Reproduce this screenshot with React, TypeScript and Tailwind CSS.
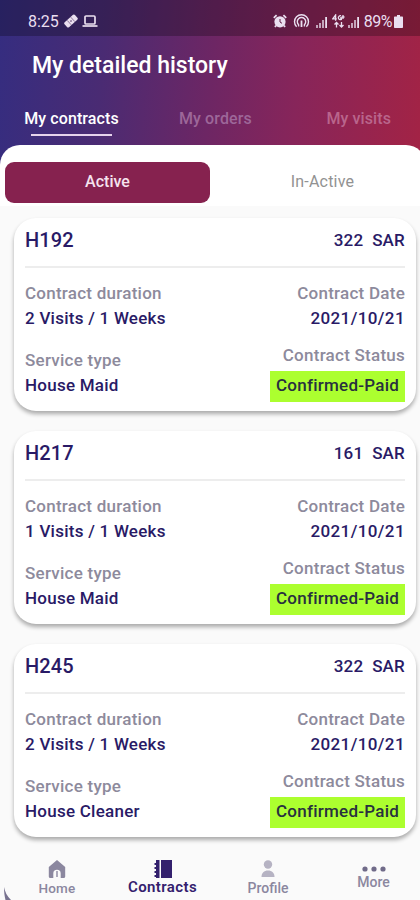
import React from 'react';

interface Contract {
  id: string;
  price: number;
  duration: string;
  date: string;
  service: string;
  status: string;
}

const contracts: Contract[] = [
  { id: 'H192', price: 322, duration: '2 Visits / 1 Weeks', date: '2021/10/21', service: 'House Maid', status: 'Confirmed-Paid' },
  { id: 'H217', price: 161, duration: '1 Visits / 1 Weeks', date: '2021/10/21', service: 'House Maid', status: 'Confirmed-Paid' },
  { id: 'H245', price: 322, duration: '2 Visits / 1 Weeks', date: '2021/10/21', service: 'House Cleaner', status: 'Confirmed-Paid' },
];

const SignalIcon = () => (
  <svg width="13" height="13" viewBox="0 0 13 13" fill="currentColor">
    <path d="M1 9h2v3H1z" opacity=".7" />
    <path d="M4 7h2v5H4z" opacity=".7" />
    <path d="M7 4h2v8H7z" opacity=".7" />
    <path d="M10.2 1h1.8v11h-1.8z" />
  </svg>
);

const StatusBar = () => (
  <div className="flex h-9 items-center bg-black/25 pl-[28px] pr-[17px] pt-[8px] text-[#eadff0]">
    <span className="w-[36px] text-[16px] leading-none">8:25</span>
    <svg width="14" height="14" viewBox="0 0 14 14" className="mr-[4px] -mt-[2px]">
      <g transform="rotate(-42 7 7)">
        <rect x="0" y="3.8" width="14" height="6.4" rx="1.4" fill="currentColor" />
        <path d="M4.6 4v6M9.4 4v6" stroke="#3c1c50" strokeWidth=".5" />
        <circle cx="7" cy="7" r=".7" fill="#3c1c50" />
      </g>
    </svg>
    <svg width="16" height="14" viewBox="0 0 16 14" fill="none" stroke="currentColor" strokeWidth="1.7" className="-mt-[2px]">
      <rect x="3" y="2" width="10" height="8" rx="1" />
      <path d="M.5 12h15" />
    </svg>

    <div className="ml-auto flex items-center">
      <svg width="14" height="14" viewBox="0 0 14 14" className="mr-[6px] -mt-[2px]">
        <circle cx="7" cy="7.8" r="5.6" fill="currentColor" />
        <path d="M.8 3.8 3.6 1.2M13.2 3.8l-2.8-2.6M3 11.5l-1 1.5M11 11.5l1 1.5" stroke="currentColor" strokeWidth="1.8" />
        <path d="M7 5v3l2 1.3" stroke="#5c1b42" strokeWidth="1" fill="none" />
      </svg>
      <svg width="17" height="14" viewBox="0 0 17 14" fill="none" stroke="currentColor" strokeWidth="1.4" className="-mt-[2px]">
        <path d="M3.6 12.7a7 7 0 1 1 9.8 0" />
        <path d="M5.6 12.6v-1.9a4.2 4.2 0 1 1 5.8 0v1.9" />
        <path d="M8.5 6.500v6.500" strokeWidth="1.8" />
      </svg>
      <div className="ml-[5px] flex items-center">
        <SignalIcon />
        <svg width="13" height="15" viewBox="0 0 13 15" fill="none" stroke="currentColor" strokeWidth="1.3" className="ml-[4px] mr-[2px] -mt-[1px]">
          <path d="M3.6 6.8V1L.8 4.8h4M9 1.8a2 2 0 1 0 .4 3.600V4H8M11 1v4M9.5 3h3" />
          <path d="M4.5 8.5v5M2.5 10.5l2-2 2 2M9.5 8v5M7.5 11l2 2 2-2" />
        </svg>
        <SignalIcon />
      </div>
      <span className="ml-[4px] text-[16px] leading-none tracking-[-0.5px]">89%</span>
      <svg width="9" height="13" viewBox="0 0 9 13" fill="currentColor" className="ml-[2px] -mt-[1px]">
        <path d="M3 0h3v1.5h2c.6 0 1 .4 1 1V12c0 .6-.4 1-1 1H1c-.6 0-1-.4-1-1V2.5c0-.6.4-1 1-1h2z" />
      </svg>
    </div>
  </div>
);

const Header = () => (
  <header className="h-[172px] shrink-0 bg-[linear-gradient(95deg,#352d80_0%,#4a2b73_25%,#6d2664_50%,#87255a_70%,#a32345_100%)]">
    <StatusBar />
    <h1 className="pl-[32px] pt-[17px] text-[23px] font-medium leading-[26px] text-white">My detailed history</h1>
    <nav className="flex pl-[24px] pr-[29px] pt-[32px] text-[16px] font-medium leading-4">
      <div className="flex w-[95px] flex-col items-center">
        <span className="whitespace-nowrap tracking-[0.1px] text-white">My contracts</span>
        <div className="mt-[7px] h-[2px] w-[81px] bg-[#e6d3ec]" />
      </div>
      <span className="ml-[60px] tracking-[0.1px] text-[#9d6799]">My orders</span>
      <span className="ml-auto tracking-[0.1px] text-[#b9658c]">My visits</span>
    </nav>
  </header>
);

const ContractCard: React.FC<{ contract: Contract }> = ({ contract }) => (
  <div className="h-[193px] rounded-[22px] bg-white px-[11px] pt-[12px] font-medium text-[#291a66] shadow-[0_3px_4px_rgba(0,0,0,0.32)]">
    <div className="flex h-[38px] items-start justify-between border-b-2 border-[#ededed]">
      <span className="text-[20px] leading-5 tracking-[0.1px]">{contract.id}</span>
      <span className="whitespace-pre pt-[2px] text-[17px] leading-4 tracking-[0.2px]">{contract.price}  SAR</span>
    </div>
    <div className="flex justify-between text-[17px] leading-4 tracking-[0.25px]">
      <div className="flex flex-col pt-[17px]">
        <span className="text-[#8d8a9c]">Contract duration</span>
        <span className="mt-[9px]">{contract.duration}</span>
        <span className="mt-[26px] text-[#8d8a9c]">Service type</span>
        <span className="mt-[9px]">{contract.service}</span>
      </div>
      <div className="flex flex-col items-end pt-[17px]">
        <span className="text-[#8d8a9c]">Contract Date</span>
        <span className="mt-[9px] tracking-[0.4px]">{contract.date}</span>
        <span className="mt-[21px] text-[#8d8a9c]">Contract Status</span>
        <span className="mt-[8px] flex h-[31px] w-[135px] items-center whitespace-nowrap bg-[#acff2f] pb-[3px] pl-[6px] tracking-[0.25px] text-[#28303f]">{contract.status}</span>
      </div>
    </div>
  </div>
);

const BottomNav = () => (
  <nav className="relative flex h-[49px] shrink-0 bg-[#fafafa] pl-[4px] pt-[9px] font-medium text-[#8b879f]">
    {/* edge of the rounded bar corner */}
    <svg width="8" height="13" viewBox="0 0 8 13" fill="#77728f" className="absolute bottom-0 left-[4px]">
      <path d="M0 0c1 5 3 9 7 13H1.5C.5 9 0 5 0 0z" />
    </svg>
    <div className="flex w-[106px] shrink-0 flex-col items-center">
      <svg width="18" height="18" viewBox="0 0 18 18" fill="currentColor">
        <path d="M9 0 .8 7v9.5c0 .8.6 1.5 1.5 1.5h3v-4.500a3.700 3.700 0 0 1 7.400 0V18h3c.9 0 1.5-.7 1.5-1.5V7z" />
        <path d="M8.3 11h1.4v6H8.3z" />
      </svg>
      <span className="mt-[4px] text-[13.5px] leading-[13px] tracking-[0.2px]">Home</span>
    </div>
    <div className="flex w-[105px] shrink-0 flex-col items-center text-[#33206d]">
      <svg width="18" height="18" viewBox="0 0 18 18" fill="currentColor">
        <path d="M7 0h11v18H7zM2 0h3.5v18H2z" />
        <path d="M.5 3h2v2h-2zM.5 7h2v2h-2zM.5 11h2v2h-2zM.5 15h2v2h-2z" />
      </svg>
      <span className="mt-[2px] text-[15px] font-semibold leading-[14px] tracking-[0.4px]">Contracts</span>
    </div>
    <div className="flex w-[106px] shrink-0 flex-col items-center">
      <svg width="14" height="18" viewBox="0 0 14 18" fill="#b6b3c3">
        <circle cx="7" cy="4.5" r="4.2" />
        <path d="M.5 17c0-4 2.5-6.5 6.5-6.5s6.5 2.5 6.5 6.5z" />
      </svg>
      <span className="mt-[4px] text-[14px] leading-[13px]">Profile</span>
    </div>
    <div className="flex w-[105px] shrink-0 flex-col items-center">
      <svg width="24" height="6" viewBox="0 0 24 6" fill="#706b89" className="mt-[6px]">
        <circle cx="3" cy="3" r="2.6" />
        <circle cx="12" cy="3" r="2.6" />
        <circle cx="21" cy="3" r="2.6" />
      </svg>
      <span className="mt-[3px] text-[14px] leading-[14px]">More</span>
    </div>
  </nav>
);

const App: React.FC = () => {
  return (
    <div className="flex h-[900px] w-[420px] flex-col overflow-hidden bg-[#fafafa] font-[Roboto,sans-serif]">
      <Header />
      <div className="-mt-[27px] flex h-[61px] w-[426px] shrink-0 rounded-t-[20px] bg-white pl-[5px] pt-[17px] text-[16px] leading-none">
        <div className="flex h-[41px] w-[205px] shrink-0 items-center justify-center rounded-[9px] bg-[#86224f] pb-[2px] font-medium text-[#f5e3ee]">Active</div>
        <div className="flex h-[41px] w-[225px] shrink-0 items-center justify-center pb-[2px] tracking-[0.2px] text-[#929292]">In-Active</div>
      </div>

      <main className="flex h-[645px] shrink-0 flex-col gap-[19.8px] bg-[#fafafa] pl-[14px] pr-[4px] pt-[12px]">
        {contracts.map((contract) => (
          <ContractCard key={contract.id} contract={contract} />
        ))}
      </main>
      <BottomNav />
    </div>
  );
};

export default App;
